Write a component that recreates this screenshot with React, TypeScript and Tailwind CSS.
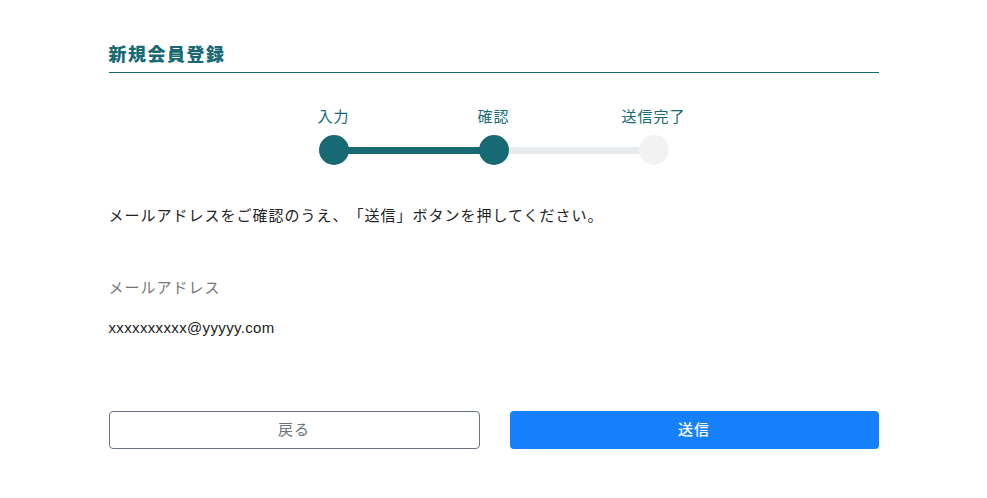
const steps = [
  { label: "入力", state: "done" },
  { label: "確認", state: "current" },
  { label: "送信完了", state: "todo" },
];

function Stepper() {
  return (
    <div className="mx-auto flex w-[350px] flex-col">
      <div className="flex justify-between">
        {steps.map((s) => (
          <div key={s.label} className="flex w-[30px] justify-center">
            <span className="whitespace-nowrap text-[15px] leading-[22px] tracking-[1px] text-[#176a74]">
              {s.label}
            </span>
          </div>
        ))}
      </div>
      <div className="relative mt-[7px] flex h-[30px] items-center justify-between">
        <div className="absolute left-[15px] right-[175px] top-[12px] h-[7px] bg-[#176a74]" />
        <div className="absolute left-[175px] right-[15px] top-[12px] h-[7px] bg-[#e8ebee]" />
        {steps.map((s) => (
          <div
            key={s.label}
            className={`relative h-[30px] w-[30px] rounded-full ${
              s.state === "todo" ? "bg-[#f2f2f3]" : "bg-[#176a74]"
            }`}
          />
        ))}
      </div>
    </div>
  );
}

export default function App() {
  return (
    <div
      className="min-h-[498px] bg-white [text-spacing-trim:space-all]"
      style={{ fontFamily: '"Liberation Sans", Arial, "Noto Sans CJK JP", sans-serif' }}
    >
      <div className="mx-auto w-[770px] pt-[42px]">
        <h1 className="border-b border-[#176a74] pb-[4px] text-[18px] font-black leading-[26px] tracking-[1.5px] text-[#176a74]">
          新規会員登録
        </h1>

        <div className="mt-[33px]">
          <Stepper />
        </div>

        <p className="mt-[39px] text-[15px] leading-[24px] tracking-[1px] text-[#222]">
          メールアドレスをご確認のうえ、「送信」ボタンを押してください。
        </p>

        <div className="mt-[48px]">
          <div className="text-[15px] leading-[24px] tracking-[1px] text-[#777]">メールアドレス</div>
          <div className="mt-[16px] text-[15px] leading-[24px] tracking-[0.35px] text-[#222]">xxxxxxxxxx@yyyyy.com</div>
        </div>

        <div className="mt-[71px] flex gap-[30px]">
          <button className="h-[38px] flex-1 rounded-[4px] border border-[#6b7580] bg-white text-[15px] tracking-[1px] text-[#6b7580]">
            戻る
          </button>
          <button className="h-[38px] flex-1 rounded-[4px] bg-[#1680fb] text-[15px] font-medium tracking-[1px] text-white">
            送信
          </button>
        </div>
      </div>
    </div>
  );
}
